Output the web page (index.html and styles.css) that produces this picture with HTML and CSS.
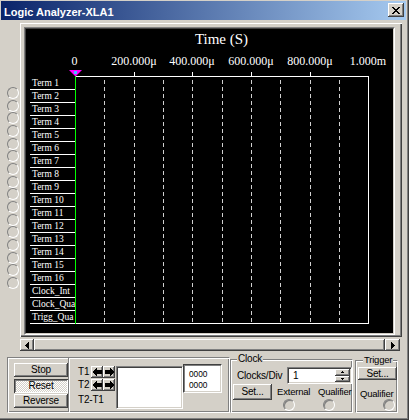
FILE: index.html
```html
<!DOCTYPE html>
<html>
<head>
<meta charset="utf-8">
<title>Logic Analyzer-XLA1</title>
<link rel="stylesheet" href="styles.css">
</head>
<body>
<div class="window">
  <div class="titlebar">
    <span class="title">Logic Analyzer-XLA1</span>
    <span class="close"><svg width="8" height="7" viewBox="0 0 8 7" shape-rendering="crispEdges"><path d="M0 0h2v1H0zM6 0h2v1H6zM1 1h2v1H1zM5 1h2v1H5zM2 2h4v1H2zM3 3h2v1H3zM2 4h4v1H2zM1 5h2v1H1zM5 5h2v1H5zM0 6h2v1H0zM6 6h2v1H6z"/></svg></span>
  </div>

  <div class="main">
    <div class="leds">
      <span class="led"></span><span class="led"></span><span class="led"></span><span class="led"></span>
      <span class="led"></span><span class="led"></span><span class="led"></span><span class="led"></span>
      <span class="led"></span><span class="led"></span><span class="led"></span><span class="led"></span>
      <span class="led"></span><span class="led"></span><span class="led"></span><span class="led"></span>
    </div>
    <div class="scope">
      <div class="frame">
        <div class="well">
          <div class="canvas">
            <svg class="plot" width="367" height="304" viewBox="0 0 367 304">
              <text class="ttl" x="195.5" y="15" text-anchor="middle">Time (S)</text>
              <g class="ticklbl" text-anchor="middle">
                <text x="48.5" y="36">0</text>
                <text x="108" y="36">200.000μ</text>
                <text x="166" y="36">400.000μ</text>
                <text x="225" y="36">600.000μ</text>
                <text x="284" y="36">800.000μ</text>
                <text x="342" y="36">1.000m</text>
              </g>
              <path class="dash" d="M78.5 51V294M108.5 51V294M137.5 51V294M166.5 51V294M196.5 51V294M225.5 51V294M254.5 51V294M284.5 51V294M313.5 51V294"/>
              <path class="axis" d="M49 47.5H343M342.5 47V295M4 294.5H343M108.5 43V47M166.5 43V47M225.5 43V47M284.5 43V47"/>
              <path class="cursor" d="M49.5 47V295"/>
              <polygon class="marker" points="43,41 56,41 49.5,47.5"/>
              <rect class="marker-dot" x="48" y="42" width="3" height="3"/>
            </svg>
            <div class="labels">
              <div class="row">Term 1</div>
              <div class="row">Term 2</div>
              <div class="row">Term 3</div>
              <div class="row">Term 4</div>
              <div class="row">Term 5</div>
              <div class="row">Term 6</div>
              <div class="row">Term 7</div>
              <div class="row">Term 8</div>
              <div class="row">Term 9</div>
              <div class="row">Term 10</div>
              <div class="row">Term 11</div>
              <div class="row">Term 12</div>
              <div class="row">Term 13</div>
              <div class="row">Term 14</div>
              <div class="row">Term 15</div>
              <div class="row">Term 16</div>
              <div class="row">Clock_Int</div>
              <div class="row">Clock_Qua</div>
              <div class="row">Trigg_Qua</div>
            </div>
          </div>
        </div>
      </div>
      <div class="hscroll">
        <span class="sb-btn left"><svg width="4" height="7" viewBox="0 0 4 7" shape-rendering="crispEdges"><path d="M3 0h1v7H3zM2 1h1v5H2zM1 2h1v3H1zM0 3h1v1H0z"/></svg></span>
        <span class="sb-thumb"></span>
        <span class="sb-btn right"><svg width="4" height="7" viewBox="0 0 4 7" shape-rendering="crispEdges"><path d="M0 0h1v7H0zM1 1h1v5H1zM2 2h1v3H2zM3 3h1v1H3z"/></svg></span>
      </div>
    </div>
  </div>

  <div class="controls">
    <div class="group run">
      <div class="runbtns">
        <span class="btn">Stop</span>
        <span class="btn pressed">Reset</span>
        <span class="btn">Reverse</span>
      </div>
      <div class="cursors">
        <div class="tgrid">
          <span class="tlbl">T1</span>
          <span class="arrows">
            <span class="abtn"><svg width="9" height="8" viewBox="0 0 9 8" shape-rendering="crispEdges"><path d="M0 3h1v2H0zM1 2h1v4H1zM2 1h1v6H2zM3 0h1v8H3zM4 2h5v4H4z"/></svg></span>
            <span class="abtn"><svg width="9" height="8" viewBox="0 0 9 8" shape-rendering="crispEdges"><path d="M8 3h1v2H8zM7 2h1v4H7zM6 1h1v6H6zM5 0h1v8H5zM0 2h5v4H0z"/></svg></span>
          </span>
          <span class="tlbl">T2</span>
          <span class="arrows">
            <span class="abtn"><svg width="9" height="8" viewBox="0 0 9 8" shape-rendering="crispEdges"><path d="M0 3h1v2H0zM1 2h1v4H1zM2 1h1v6H2zM3 0h1v8H3zM4 2h5v4H4z"/></svg></span>
            <span class="abtn"><svg width="9" height="8" viewBox="0 0 9 8" shape-rendering="crispEdges"><path d="M8 3h1v2H8zM7 2h1v4H7zM6 1h1v6H6zM5 0h1v8H5zM0 2h5v4H0z"/></svg></span>
          </span>
          <span class="tlbl wide">T2-T1</span>
        </div>
        <div class="readout"></div>
        <div class="numbox">0000<br>0000</div>
      </div>
    </div>

    <div class="group clock">
      <span class="legend">Clock</span>
      <div class="clk-row">
        <span class="clk-lbl">Clocks/Div</span>
        <span class="spin">
          <span class="spin-val">1</span>
          <span class="spin-btns">
            <span class="sbtn"><svg width="3" height="2" viewBox="0 0 3 2" shape-rendering="crispEdges"><path d="M1 0h1v1H1zM0 1h3v1H0z"/></svg></span>
            <span class="sbtn"><svg width="3" height="2" viewBox="0 0 3 2" shape-rendering="crispEdges"><path d="M0 0h3v1H0zM1 1h1v1H1z"/></svg></span>
          </span>
        </span>
      </div>
      <div class="clk-row2">
        <span class="btn setbtn">Set...</span>
        <div class="opt ext">
          <span class="opt-lbl">External</span>
          <span class="radio"></span>
        </div>
        <div class="opt qual">
          <span class="opt-lbl">Qualifier</span>
          <span class="radio"></span>
        </div>
      </div>
    </div>

    <div class="group trig">
      <span class="legend">Trigger</span>
      <span class="btn setbtn small">Set...</span>
      <span class="trig-lbl">Qualifier</span>
      <span class="radio trig-radio"></span>
    </div>
  </div>
</div>
</body>
</html>
```

FILE: styles.css
```css
html, body {
  margin: 0;
  padding: 0;
  background: #d4d0c8;
}

.window {
  width: 409px;
  height: 420px;
  box-sizing: border-box;
  padding: 1px 3px 3px 1px;
  background: #d4d0c8;
  box-shadow: inset -1px -1px #404040, inset -2px -2px #808080;
  font-family: "Liberation Sans", Arial, sans-serif;
  font-size: 10px;
  letter-spacing: -0.2px;
  color: #000;
  display: flex;
  flex-direction: column;
  overflow: hidden;
}

/* title bar */
.titlebar {
  height: 19px;
  flex: none;
  display: flex;
  align-items: center;
  justify-content: space-between;
  padding: 0 2px 0 3px;
  background: linear-gradient(to right, #0a246a, #a6caf0);
  color: #fff;
  letter-spacing: 0;
}
.title {
  font-weight: bold;
  font-size: 11px;
  margin-top: 3px;
  white-space: nowrap;
}
.close {
  width: 16px;
  height: 14px;
  box-sizing: border-box;
  display: flex;
  align-items: center;
  justify-content: center;
  background: #d4d0c8;
  box-shadow: inset -1px -1px #404040, inset 1px 1px #fff, inset -2px -2px #808080;
  margin-top: -1px;
}
.close svg { fill: #000; display: block; }

/* main area */
.main {
  display: flex;
  padding-top: 3px;
}
.leds {
  width: 19px;
  box-sizing: border-box;
  padding: 64px 0 0 6px;
  display: flex;
  flex-direction: column;
  gap: 0.66px;
}
.led, .radio {
  width: 12px;
  height: 12px;
  box-sizing: border-box;
  border-radius: 50%;
  border: 1px solid;
  border-color: #808080 #fff #fff #808080;
  display: block;
}
.radio {
  box-shadow: inset 1px 1px #808080;
}

.scope {
  width: 382px;
  display: flex;
  flex-direction: column;
}
.frame {
  height: 314px;
  box-sizing: border-box;
  padding: 4px 7px 2px 4px;
  box-shadow: inset 1px 1px #fff, inset -1px -1px #404040, inset -2px -2px #808080;
}
.well {
  border: 1px solid;
  border-color: #808080 #fff #fff #808080;
}
.canvas {
  width: 367px;
  height: 304px;
  background: #000;
  border: 1px solid;
  border-color: #404040 #d4d0c8 #d4d0c8 #404040;
  display: grid;
  overflow: hidden;
  letter-spacing: 0;
}
.canvas > * {
  grid-area: 1 / 1;
}
.plot { display: block; }
.plot text { fill: #fff; font-family: "Liberation Serif", "Times New Roman", serif; }
.plot .ttl { font-size: 15px; }
.plot .ticklbl text { font-size: 12px; }
.plot .axis { stroke: #fff; stroke-width: 1; fill: none; }
.plot .dash { stroke: #d0d0d0; stroke-width: 1; stroke-dasharray: 4 3; fill: none; }
.plot .cursor { stroke: #00ff00; stroke-width: 1; }
.plot .marker { fill: #ff00ff; }
.plot .marker-dot { fill: #40c0ff; }

.labels {
  padding: 48px 0 0 4px;
}
.row {
  width: 43px;
  height: 12px;
  padding-left: 2px;
  border-bottom: 1px solid #fff;
  color: #fff;
  font-family: "Liberation Serif", "Times New Roman", serif;
  font-size: 9.5px;
  line-height: 12px;
  white-space: nowrap;
  overflow: hidden;
}

.hscroll {
  display: flex;
  height: 12px;
  width: 380px;
  margin-top: 2px;
}
.sb-btn, .sb-thumb, .btn, .abtn, .sbtn {
  background: #d4d0c8;
  box-shadow: inset -1px -1px #404040, inset 1px 1px #fff, inset -2px -2px #808080;
  box-sizing: border-box;
}
.sb-btn {
  width: 14px;
  display: flex;
  align-items: center;
  justify-content: center;
}
.sb-btn.right { width: 15px; }
.sb-btn svg { fill: #000; display: block; }
.sb-thumb { flex: 1; }

/* controls */
.controls {
  display: flex;
  align-items: flex-start;
  padding: 6px 0 0 6px;
}
.group {
  box-sizing: border-box;
  border: 1px solid;
  border-color: #808080 #fff #fff #808080;
  box-shadow: inset 1px 1px #fff, inset -1px -1px #808080;
}
.run {
  width: 223px;
  height: 56px;
  display: flex;
}
.runbtns {
  width: 54px;
  padding: 5px 0 0 6px;
  border-right: 1px solid #808080;
  box-shadow: 1px 0 #fff;
  display: flex;
  flex-direction: column;
  gap: 1.5px;
}
.btn {
  height: 14px;
  text-align: center;
  line-height: 14px;
  white-space: nowrap;
}
.btn.pressed {
  background: repeating-conic-gradient(#fff 0 25%, #d4d0c8 0 50%) 0 0 / 2px 2px;
  box-shadow: inset 1px 1px #404040, inset -1px -1px #fff, inset 2px 2px #808080;
}

.cursors {
  flex: 1;
  display: flex;
  align-items: flex-start;
  padding: 8px 0 0 9px;
}
.tgrid {
  display: grid;
  grid-template-columns: 13px 24px;
  grid-template-rows: 12px 12px auto;
  row-gap: 1px;
}
.tlbl {
  line-height: 12px;
  white-space: nowrap;
}
.tlbl.wide {
  grid-column: 1 / 3;
  padding-top: 2px;
}
.arrows {
  display: flex;
}
.abtn {
  width: 12px;
  height: 12px;
  display: flex;
  align-items: center;
  justify-content: center;
}
.abtn svg { fill: #000; display: block; }
.readout {
  width: 67px;
  height: 43px;
  box-sizing: border-box;
  margin-left: 1px;
  background: #fff;
  border: 1px solid;
  border-color: #808080 #fff #fff #808080;
  box-shadow: inset 1px 1px #404040, inset -1px -1px #d4d0c8;
}
.numbox {
  width: 39px;
  height: 29px;
  box-sizing: border-box;
  margin-top: -2px;
  padding: 4px 0 0 5px;
  background: #fff;
  border: 1px solid;
  border-color: #404040 #fff #fff #404040;
  box-shadow: inset 1px 1px #808080, inset -1px -1px #d4d0c8;
  font-size: 8.3px;
  line-height: 11px;
  letter-spacing: 0;
}

.clock {
  width: 123px;
  height: 54px;
  margin-top: 2px;
  display: flex;
  flex-direction: column;
}
.legend {
  align-self: flex-start;
  margin: -7px 0 0 6px;
  padding: 0 1px;
  background: #d4d0c8;
  line-height: 12px;
}
.trig .legend {
  font-size: 9.5px;
  margin-left: 7px;
}
.clk-row {
  display: flex;
  align-items: center;
  margin-top: 2px;
  padding-left: 6px;
}
.clk-lbl {
  width: 50px;
  white-space: nowrap;
}
.spin {
  width: 65px;
  height: 17px;
  box-sizing: border-box;
  display: flex;
  background: #fff;
  border: 1px solid;
  border-color: #808080 #fff #fff #808080;
  box-shadow: inset 1px 1px #404040, inset -1px -1px #d4d0c8;
  padding: 1px;
}
.spin-val {
  flex: 1;
  padding-left: 4px;
  line-height: 13px;
}
.spin-btns {
  width: 15px;
  display: flex;
  flex-direction: column;
}
.sbtn {
  flex: 1;
  display: flex;
  align-items: center;
  justify-content: center;
}
.sbtn svg { fill: #000; display: block; }

.clk-row2 {
  display: flex;
  align-items: flex-start;
  padding-left: 2px;
}
.setbtn {
  width: 39px;
  height: 16px;
  line-height: 16px;
}
.setbtn.small {
  height: 13px;
  line-height: 13px;
  margin: 1px 0 0 2px;
}
.opt {
  display: flex;
  flex-direction: column;
  padding-top: 2px;
}
.opt-lbl, .trig-lbl {
  font-size: 9.5px;
  line-height: 12px;
  white-space: nowrap;
}
.opt .radio { margin-top: 1px; }
.ext { width: 41px; margin-left: 5px; }
.ext .radio { margin-left: 6px; }
.qual { width: 34px; }
.qual .radio { margin-left: 5px; }

.trig {
  width: 43px;
  height: 53px;
  margin: 3px 0 0 2px;
  display: flex;
  flex-direction: column;
  align-items: flex-start;
}
.trig-lbl {
  margin: 8px 0 0 4px;
}
.trig-radio {
  margin: -1px 0 0 27px;
}
```
